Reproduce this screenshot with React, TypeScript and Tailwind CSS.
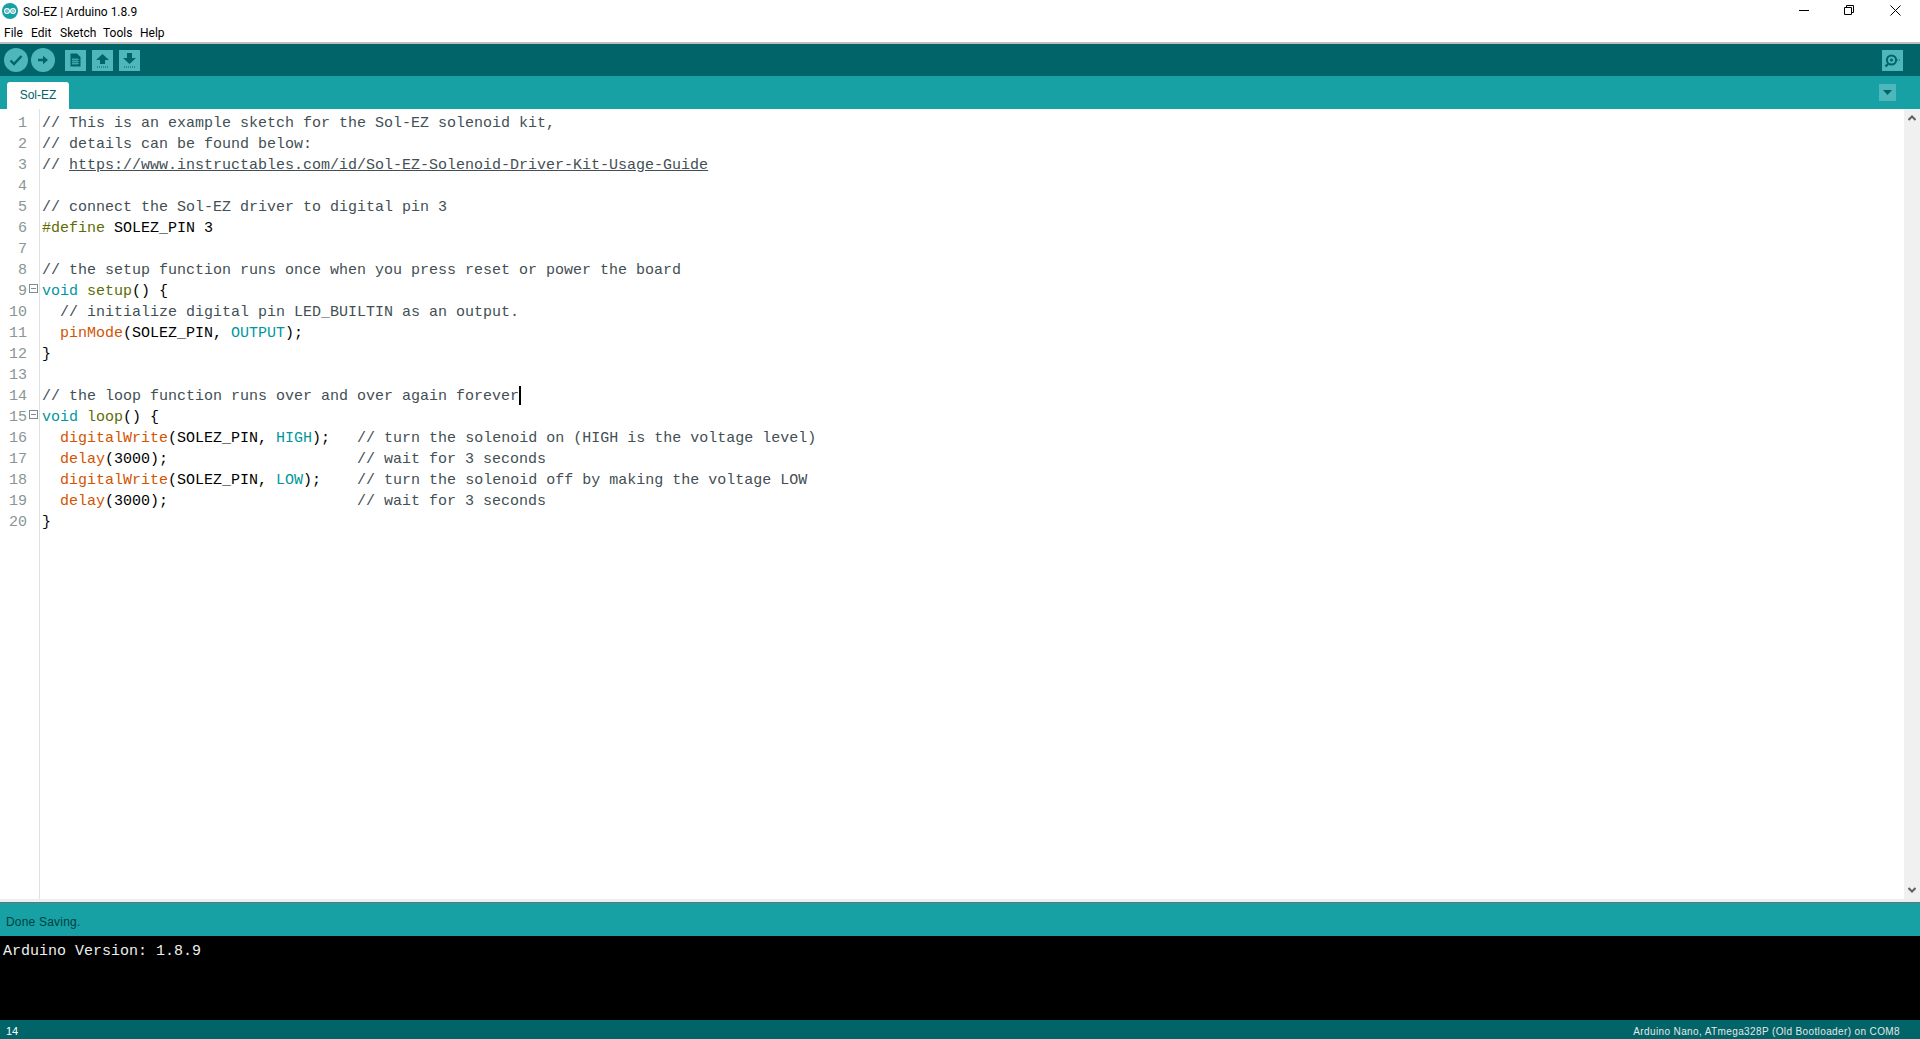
import type { ReactNode } from "react";

const c = "text-[#434f54]";
const k = "text-[#00979c]";
const g = "text-[#5e6d03]";
const o = "text-[#d35400]";
const b = "text-[#000000]";

type Seg = [string, string] | [string, string, boolean];

const lines: Seg[][] = [
  [["// This is an example sketch for the Sol-EZ solenoid kit,", c]],
  [["// details can be found below:", c]],
  [["// ", c], ["https://www.instructables.com/id/Sol-EZ-Solenoid-Driver-Kit-Usage-Guide", c, true]],
  [],
  [["// connect the Sol-EZ driver to digital pin 3", c]],
  [["#define", g], [" SOLEZ_PIN 3", b]],
  [],
  [["// the setup function runs once when you press reset or power the board", c]],
  [["void", k], [" ", b], ["setup", g], ["()", b], [" {", b]],
  [["  // initialize digital pin LED_BUILTIN as an output.", c]],
  [["  ", b], ["pinMode", o], ["(SOLEZ_PIN, ", b], ["OUTPUT", k], [");", b]],
  [["}", b]],
  [],
  [["// the loop function runs over and over again forever", c]],
  [["void", k], [" ", b], ["loop", g], ["()", b], [" {", b]],
  [["  ", b], ["digitalWrite", o], ["(SOLEZ_PIN, ", b], ["HIGH", k], [");   ", b], ["// turn the solenoid on (HIGH is the voltage level)", c]],
  [["  ", b], ["delay", o], ["(3000);", b], ["                     ", b], ["// wait for 3 seconds", c]],
  [["  ", b], ["digitalWrite", o], ["(SOLEZ_PIN, ", b], ["LOW", k], [");    ", b], ["// turn the solenoid off by making the voltage LOW", c]],
  [["  ", b], ["delay", o], ["(3000);", b], ["                     ", b], ["// wait for 3 seconds", c]],
  [["}", b]],
];

function ToolSquare({ children, className }: { children: ReactNode; className: string }) {
  return <div className={`w-[21px] h-[21px] bg-[#4db7bb] flex items-center justify-center ${className}`}>{children}</div>;
}

function ToolRound({ children, className }: { children: ReactNode; className: string }) {
  return <div className={`w-[24px] h-[24px] rounded-full bg-[#4db7bb] flex items-center justify-center ${className}`}>{children}</div>;
}

export default function App() {
  return (
    <div className="h-screen flex flex-col bg-white overflow-hidden font-['Liberation_Sans',sans-serif]">
      {/* window chrome */}
      <div className="h-[24px] shrink-0 flex items-center relative">
        <svg width="16" height="16" viewBox="0 0 16 16" className="ml-[2px] mb-[3px]">
          <circle cx="8" cy="8" r="8" fill="#17a1a5" />
          <circle cx="5" cy="8" r="2.4" fill="none" stroke="#fff" strokeWidth="1.2" />
          <circle cx="11" cy="8" r="2.4" fill="none" stroke="#fff" strokeWidth="1.2" />
          <path d="M4 8h2M10 8h2M11 7v2" stroke="#fff" strokeWidth="0.8" />
        </svg>
        <span className="ml-[5px] mb-[1px] text-[12px] text-black font-['Roboto',sans-serif]">Sol-EZ | Arduino 1.8.9</span>
        <div className="ml-auto flex items-center mb-[4px]">
          <svg width="10" height="10" viewBox="0 0 10 10" className="mr-[35px]">
            <path d="M0 5.5h10" stroke="#000" strokeWidth="1" />
          </svg>
          <svg width="10" height="10" viewBox="0 0 10 10" className="mr-[36px]">
            <path d="M.5 2.5h7v7h-7zM2.5 2.5v-2h7v7h-2" fill="none" stroke="#000" strokeWidth="1" />
          </svg>
          <svg width="11" height="11" viewBox="0 0 11 11" className="mr-[19px]">
            <path d="M.5.5l10 10M10.5.5l-10 10" stroke="#000" strokeWidth="1" />
          </svg>
        </div>
      </div>
      <div className="h-[18px] shrink-0 flex items-center text-[12px] text-black font-['Roboto',sans-serif] pl-[4px]">
        <span className="w-[27px]">File</span>
        <span className="w-[29px]">Edit</span>
        <span className="w-[43px]">Sketch</span>
        <span className="w-[37px]">Tools</span>
        <span>Help</span>
      </div>
      <div className="h-[2px] shrink-0 bg-[#bfbfbf]" />

      {/* toolbar */}
      <div className="h-[32px] shrink-0 bg-[#006468] flex items-center pl-[4px] pr-[17px]">
        <ToolRound className="">
          <svg width="14" height="12" viewBox="0 0 14 12">
            <path d="M1.5 6.5l3.5 3.5 7.5-8" fill="none" stroke="#006468" strokeWidth="2.4" />
          </svg>
        </ToolRound>
        <ToolRound className="ml-[3px]">
          <svg width="12" height="12" viewBox="0 0 12 12">
            <path d="M1 4.8h5V1.8L11 6 6 10.2V7.2H1z" fill="#006468" />
          </svg>
        </ToolRound>
        <ToolSquare className="ml-[10px]">
          <svg width="11" height="14" viewBox="0 0 11 14">
            <path d="M.5.5h6.5l3.5 3.5v9.5H.5z" fill="#006468" />
            <path d="M3 5v7M5 5v7M7 5v7M2 6.5h7M2 8.5h7M2 10.5h7" stroke="#4db7bb" strokeWidth="0.7" />
          </svg>
        </ToolSquare>
        <ToolSquare className="ml-[6px]">
          <svg width="13" height="15" viewBox="0 0 13 15">
            <path d="M6.5 1L13 7H9v4H4V7H0z" fill="#006468" />
            <path d="M1 14h11" stroke="#006468" strokeWidth="1" strokeDasharray="1 1" />
          </svg>
        </ToolSquare>
        <ToolSquare className="ml-[6px]">
          <svg width="13" height="15" viewBox="0 0 13 15">
            <path d="M4 0h5v5h4l-6.5 6L0 5h4z" fill="#006468" />
            <path d="M1 14h11" stroke="#006468" strokeWidth="1" strokeDasharray="1 1" />
          </svg>
        </ToolSquare>
        <ToolSquare className="ml-auto">
          <svg width="17" height="15" viewBox="0 0 17 15">
            <circle cx="7.5" cy="7" r="4.6" fill="none" stroke="#006468" strokeWidth="2" />
            <circle cx="7.5" cy="7" r="1.5" fill="#006468" />
            <path d="M4 11L1.5 13.5" stroke="#006468" strokeWidth="2.4" />
            <path d="M13 7h4" stroke="#006468" strokeWidth="1" strokeDasharray="1 1" />
          </svg>
        </ToolSquare>
      </div>

      {/* tab bar */}
      <div className="h-[33px] shrink-0 bg-[#17a1a5] flex items-end pl-[7px] pr-[24px]">
        <div className="w-[62px] h-[27px] bg-white rounded-t-[3px] flex items-center justify-center pb-[2px] text-[12px] text-[#006468]">Sol-EZ</div>
        <div className="ml-auto mb-[8px] w-[17px] h-[17px] bg-[#4db7bb] flex items-center justify-center">
          <svg width="9" height="5" viewBox="0 0 9 5">
            <path d="M0 0h9L4.5 5z" fill="#006468" />
          </svg>
        </div>
      </div>

      {/* editor */}
      <div className="flex-1 min-h-0 flex">
        <div className="flex-1 min-w-0 flex font-['Liberation_Mono',monospace] text-[15px] leading-[21px] pt-[4px]">
          <div className="w-[40px] shrink-0 border-r border-[#e0e0e0] -mt-[4px] pt-[4px] text-[#8a9596]">
            {lines.map((_, i) => (
              <div key={i} className="h-[21px] flex relative">
                <span className="w-[27px] text-right">{i + 1}</span>
                {(i === 8 || i === 14) && (
                  <div className="absolute left-[29px] top-[3px] w-[9px] h-[9px] border border-[#7f8c8d] flex items-center justify-center">
                    <div className="w-[5px] h-px bg-[#7f8c8d]" />
                  </div>
                )}
              </div>
            ))}
          </div>
          <div className="pl-[2px] whitespace-pre">
            {lines.map((segs, i) => (
              <div key={i} className="h-[21px] flex">
                {segs.map((s, j) => (
                  <span key={j} className={`${s[1]} ${s[2] ? "underline" : ""}`}>{s[0]}</span>
                ))}
                {i === 13 && <span className="w-[2px] h-[19px] bg-black" />}
              </div>
            ))}
          </div>
        </div>
        <div className="w-[16px] shrink-0 bg-[#f0f0f0] flex flex-col items-center justify-between py-[6px]">
          <svg width="8" height="6" viewBox="0 0 8 6">
            <path d="M.5 5L4 1.5 7.5 5" fill="none" stroke="#606060" strokeWidth="2" />
          </svg>
          <svg width="8" height="6" viewBox="0 0 8 6">
            <path d="M.5 1L4 4.5 7.5 1" fill="none" stroke="#606060" strokeWidth="2" />
          </svg>
        </div>
      </div>
      <div className="h-[3px] shrink-0 bg-[#eeeeee]" />
      <div className="h-px shrink-0 bg-[#707070]" />

      {/* status + console */}
      <div className="h-[33px] shrink-0 bg-[#17a1a5] flex items-center pl-[6px] pt-[5px] text-[12px] text-[#003f42] tracking-[0.2px]">Done Saving.</div>
      <div className="h-[84px] shrink-0 bg-black pl-[3px] pt-[5px] font-['Liberation_Mono',monospace] text-[15px] leading-[21px] text-[#eeeeee] whitespace-pre">Arduino Version: 1.8.9</div>
      <div className="h-[19px] shrink-0 bg-[#006468] flex items-center justify-between pl-[6px] pr-[20px] pt-[3px] text-white">
        <span className="text-[11px]">14</span>
        <span className="text-[10px] tracking-[0.38px] text-[#e6e6e6]">Arduino Nano, ATmega328P (Old Bootloader) on COM8</span>
      </div>
    </div>
  );
}
